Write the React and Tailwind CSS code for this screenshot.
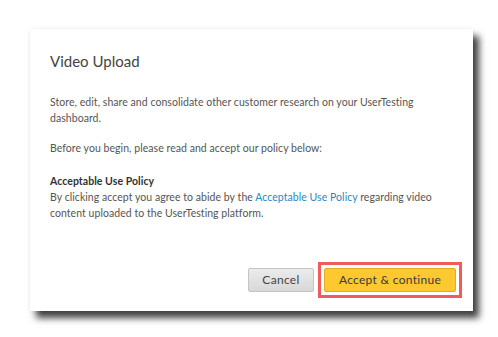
export default function App() {
  return (
    <div className="w-[498px] h-[337px] bg-white pt-[29px] pl-[30px] font-['Lato',sans-serif]">
      <div className="w-[443px] h-[282px] bg-white shadow-[6px_7px_7px_rgba(0,0,0,0.75),0_0_4px_rgba(0,0,0,0.08)] pl-[20px] pr-[11px] pt-[22px] flex flex-col text-[#555] text-[10.5px] leading-[16px] tracking-[0.05px]">
        <h1 className="text-[15px] leading-[20px] text-[#444] tracking-normal">Video Upload</h1>
        <p className="mt-[23px] pr-[20px]">
          Store, edit, share and consolidate other customer research on your UserTesting dashboard.
        </p>
        <p className="mt-[14px]">Before you begin, please read and accept our policy below:</p>
        <p className="mt-[17px] font-bold text-[#333]">Acceptable Use Policy</p>
        <p className="pr-[20px]">
          By clicking accept you agree to abide by the{" "}
          <span className="text-[#2b87c4]">Acceptable Use Policy</span> regarding video content uploaded to the UserTesting platform.
        </p>
        <div className="mt-auto mb-[13px] flex items-center justify-end gap-[4px]">
          <button className="w-[66px] h-[24px] rounded-[2px] border border-[#c4c4c4] bg-gradient-to-b from-[#ececec] to-[#d8d8d8] text-[#444] text-[12px] tracking-[0.3px]">
            Cancel
          </button>
          <div className="border-[3px] border-[#f25b5e] p-[3px]">
            <button className="w-[132px] h-[24px] rounded-[2px] border border-[#e0ae1c] bg-[#fdc830] text-[#3a3a3a] text-[12px] tracking-[0.3px]">
              Accept &amp; continue
            </button>
          </div>
        </div>
      </div>
    </div>
  );
}
